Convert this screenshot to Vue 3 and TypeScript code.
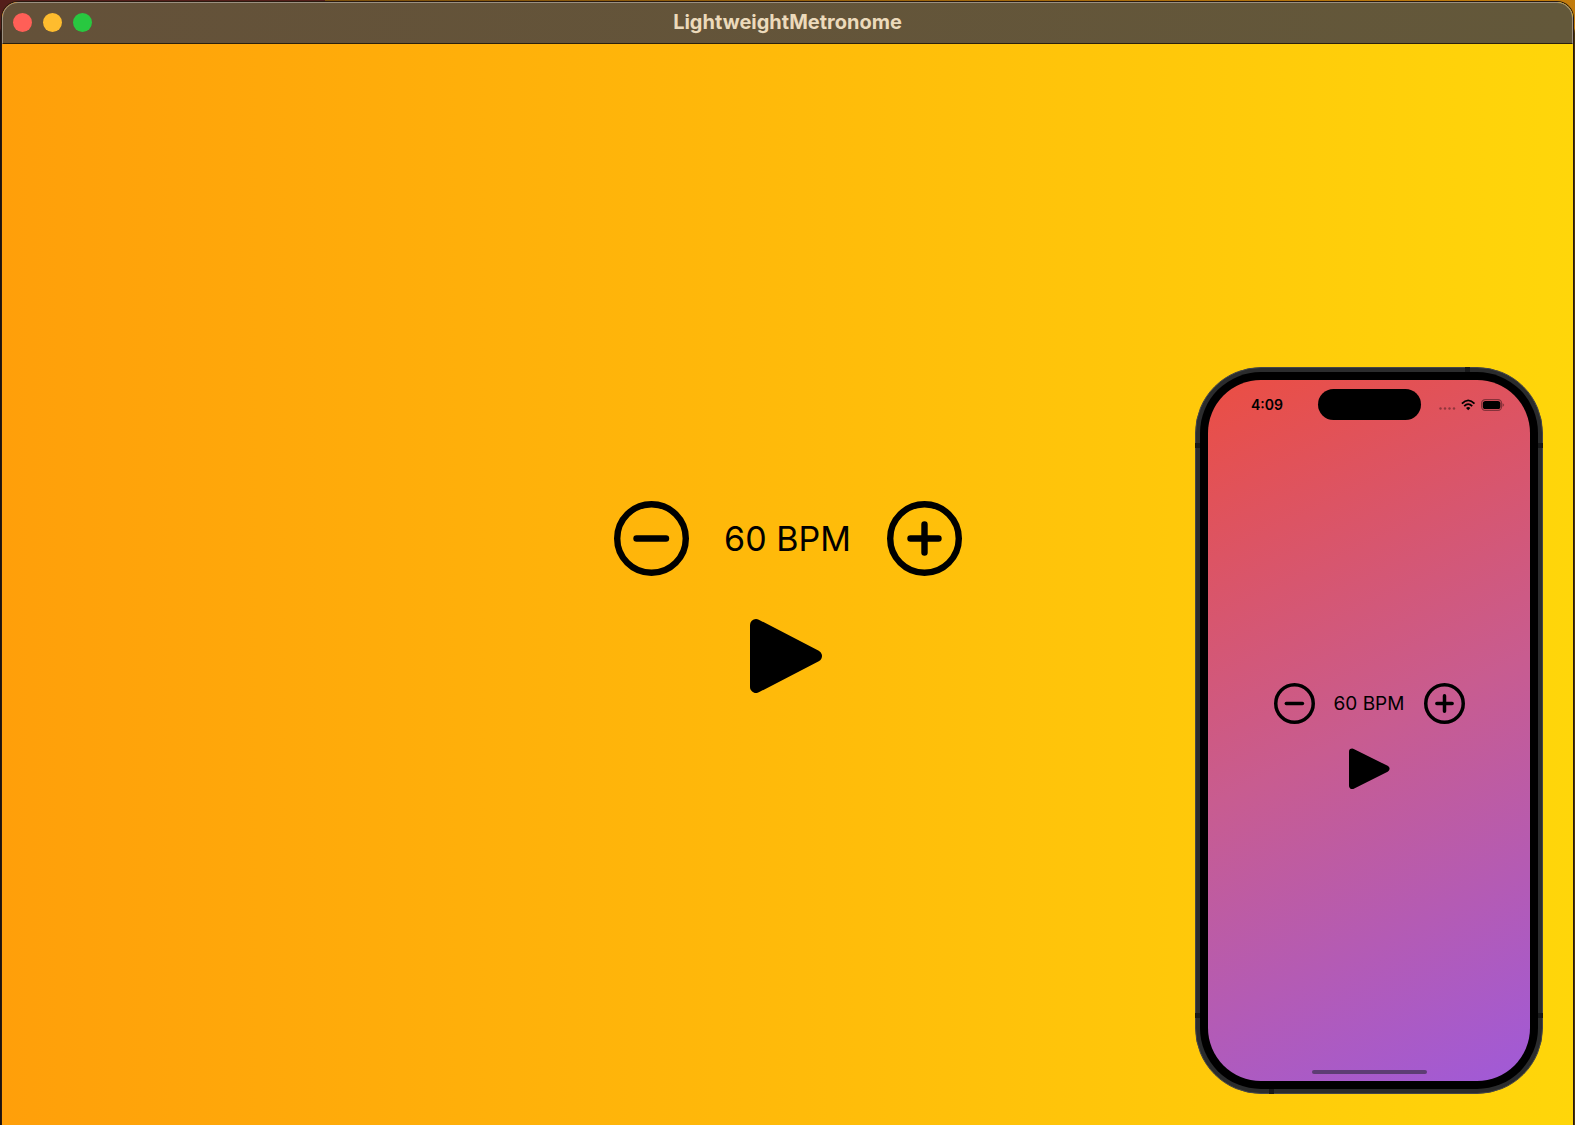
<script setup lang="ts">
import { ref } from 'vue'

interface Metronome {
  bpm: number
  playing: boolean
}

const desktop = ref<Metronome>({ bpm: 60, playing: false })
const mobile = ref<Metronome>({ bpm: 60, playing: false })

function change(target: Metronome, delta: number): void {
  target.bpm = Math.min(240, Math.max(20, target.bpm + delta))
}
</script>

<template>
  <div class="desktop">
    <div class="window">
      <header class="titlebar">
        <div class="lights">
          <button class="light close" type="button" aria-label="Close"></button>
          <button class="light minimize" type="button" aria-label="Minimize"></button>
          <button class="light zoom" type="button" aria-label="Zoom"></button>
        </div>
        <h1 class="title">LightweightMetronome</h1>
      </header>

      <main class="content">
        <section class="metronome">
          <div class="tempo">
            <button class="control" type="button" aria-label="Slower" @click="change(desktop, -1)">
              <svg class="round" viewBox="0 0 75 75">
                <circle cx="37.5" cy="37.5" r="34.3" />
                <path d="M22.5 37.5H52" />
              </svg>
            </button>
            <output class="bpm">{{ desktop.bpm }} BPM</output>
            <button class="control" type="button" aria-label="Faster" @click="change(desktop, 1)">
              <svg class="round" viewBox="0 0 75 75">
                <circle cx="37.5" cy="37.5" r="34.3" />
                <path d="M23.5 37.5H51.5M37.5 23.5V51.5" />
              </svg>
            </button>
          </div>
          <button class="control" type="button" aria-label="Play" @click="desktop.playing = !desktop.playing">
            <svg class="play" viewBox="0 0 75 75">
              <path d="M6 7L66 38L6 69Z" />
            </svg>
          </button>
        </section>
      </main>
    </div>

    <aside class="phone">
      <i class="band top"></i>
      <i class="band bottom"></i>
      <i class="band left upper"></i>
      <i class="band left lower"></i>
      <i class="band right upper"></i>
      <i class="band right lower"></i>
      <div class="bezel">
        <div class="screen">
          <div class="status">
            <time class="clock">4:09</time>
            <div class="island"></div>
            <div class="indicators">
              <svg class="dots" width="17" height="12" viewBox="0 0 17 12">
                <circle cx="1.5" cy="9.5" r="1.2" />
                <circle cx="6" cy="9.5" r="1.2" />
                <circle cx="10.5" cy="9.5" r="1.2" />
                <circle cx="15" cy="9.5" r="1.2" />
              </svg>
              <svg width="15" height="12" viewBox="0 0 15 12">
                <path class="wave" d="M.9 4.7Q7.2-1.9 13.5 4.7M3.2 7.2Q7.2 3 11.2 7.2" />
                <path d="M5 8.9Q7.2 7.1 9.4 8.9L7.2 11.2Z" />
              </svg>
              <svg width="24" height="12" viewBox="0 0 24 12">
                <rect class="shell" x=".6" y=".6" width="20" height="10.8" rx="3.6" />
                <rect x="1.8" y="2" width="17.6" height="8" rx="2.6" />
                <path class="cap" d="M21.6 4.2Q23.2 4.8 23.2 6Q23.2 7.2 21.6 7.8Z" />
              </svg>
            </div>
          </div>

          <section class="metronome small">
            <div class="tempo">
              <button class="control" type="button" aria-label="Slower" @click="change(mobile, -1)">
                <svg class="round" viewBox="0 0 75 75">
                  <circle cx="37.5" cy="37.5" r="34.3" />
                  <path d="M22.5 37.5H52" />
                </svg>
              </button>
              <output class="bpm">{{ mobile.bpm }} BPM</output>
              <button class="control" type="button" aria-label="Faster" @click="change(mobile, 1)">
                <svg class="round" viewBox="0 0 75 75">
                  <circle cx="37.5" cy="37.5" r="34.3" />
                  <path d="M23.5 37.5H51.5M37.5 23.5V51.5" />
                </svg>
              </button>
            </div>
            <button class="control" type="button" aria-label="Play" @click="mobile.playing = !mobile.playing">
              <svg class="play" viewBox="0 0 75 75">
                <path d="M6 7L68 38L6 69Z" />
              </svg>
            </button>
          </section>

          <div class="home"></div>
        </div>
      </div>
    </aside>
  </div>
</template>

<style>
body {
  margin: 0;
}
</style>

<style scoped>
* {
  box-sizing: border-box;
}

.desktop {
  position: relative;
  display: flex;
  min-height: 100vh;
  padding: 2px 2px 0;
  overflow: hidden;
  background: linear-gradient(to right, #541f1a 325px, #7d500c 325px, #c27c0c);
  font-family: Inter, "Liberation Sans", sans-serif;
  color: #000;
}

.window {
  flex: 1;
  display: flex;
  flex-direction: column;
  overflow: hidden;
  border-radius: 16px 16px 0 0;
  box-shadow: 0 0 0 1px #2a1a10, -1px 16px 0 1px #1c120e, 1px 16px 0 1px #4a350c;
  background: linear-gradient(to right, #ff9f0a, #ffd60a);
}

.titlebar {
  display: grid;
  grid-template-columns: 1fr auto 1fr;
  align-items: center;
  height: 42px;
  padding: 0 10px;
  border: 1px solid #9b9080;
  border-bottom: 1px solid #2a200e;
  border-radius: 16px 16px 0 0;
  background: linear-gradient(to right, #645139, #63583a);
}

.lights {
  display: flex;
  gap: 11px;
  padding-bottom: 1px;
}

.light {
  width: 19px;
  height: 19px;
  padding: 0;
  border: 0;
  border-radius: 50%;
}

.close {
  background: #ff5f57;
}

.minimize {
  background: #febc2e;
}

.zoom {
  background: #28c840;
}

.title {
  margin: 0;
  padding-bottom: 2px;
  font-size: 20px;
  line-height: 24px;
  font-weight: 700;
  color: #ecdabb;
}

.content {
  flex: 1;
  display: flex;
  align-items: center;
  justify-content: center;
  padding-top: 25px;
}

.metronome {
  display: flex;
  flex-direction: column;
  align-items: center;
  gap: 42px;
}

.tempo {
  display: flex;
  align-items: center;
}

.control {
  display: block;
  padding: 0;
  border: 0;
  background: none;
  color: inherit;
}

.round,
.play {
  display: block;
  width: 75px;
  height: 75px;
  stroke: currentColor;
  stroke-linecap: round;
  stroke-linejoin: round;
}

.round {
  fill: none;
  stroke-width: 6.4;
}

.play {
  fill: currentColor;
  stroke-width: 12;
}

.bpm {
  width: 198px;
  font-size: 34px;
  line-height: 44px;
  text-align: center;
  white-space: nowrap;
}

.phone {
  position: absolute;
  right: 32px;
  bottom: 31px;
  width: 348px;
  height: 727px;
  padding: 4px;
  border: 1px solid #454648;
  border-radius: 66px;
  background: #2b2c2d;
}

.bezel {
  height: 100%;
  padding: 8px;
  border-radius: 61px;
  background: #000;
}

.screen {
  display: flex;
  flex-direction: column;
  align-items: center;
  justify-content: space-between;
  height: 100%;
  padding: 9px 0 7px;
  border-radius: 53px;
  background: linear-gradient(155deg, #eb4e43, #c85c90 50%, #a05ad8);
}

.band {
  position: absolute;
  width: 5px;
  height: 5px;
  background: #18191a;
}

.top {
  top: -1px;
  right: 72px;
}

.bottom {
  bottom: -1px;
  left: 73px;
}

.left {
  left: -1px;
}

.right {
  right: -1px;
}

.upper {
  top: 75px;
}

.lower {
  bottom: 75px;
}

.status {
  display: grid;
  grid-template-columns: 1fr auto 1fr;
  align-items: center;
  width: 100%;
}

.clock {
  padding-left: 43px;
  font-size: 14px;
  line-height: 20px;
  font-weight: 600;
}

.island {
  width: 103px;
  height: 31px;
  border-radius: 16px;
  background: #000;
}

.indicators {
  display: flex;
  align-items: center;
  gap: 5px;
  padding-left: 18px;
}

.dots,
.cap {
  opacity: 0.35;
}

.wave,
.shell {
  fill: none;
  stroke: #000;
}

.wave {
  stroke-width: 1.8;
}

.shell {
  stroke-width: 1.2;
  opacity: 0.4;
}

.small {
  gap: 24px;
  padding-bottom: 18px;
}

.small .round,
.small .play {
  width: 41px;
  height: 41px;
}

.small .bpm {
  width: 109px;
  font-size: 19px;
  line-height: 25px;
}

.home {
  width: 115px;
  height: 4px;
  border-radius: 2px;
  background: #5d3d74;
}
</style>
